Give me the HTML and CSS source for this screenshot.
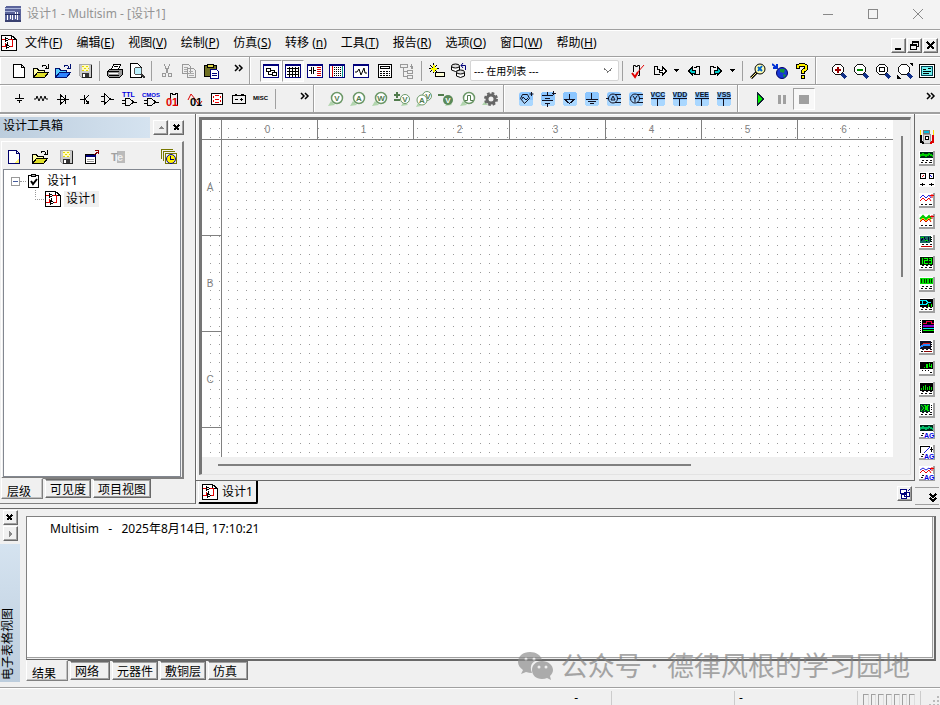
FILE: index.html
```html
<!DOCTYPE html>
<html lang="zh-CN">
<head>
<meta charset="utf-8">
<title>设计1 - Multisim - [设计1]</title>
<link rel="stylesheet" href="styles.css">
</head>
<body>
<svg class="sprite" aria-hidden="true">
  <symbol id="doc" viewBox="0 0 16 16"><path d="M2.500 1.500h8l3 3v10h-11zM10.500 1.500v3h3" fill="#fff" stroke="#000"/></symbol>
  <symbol id="open" viewBox="0 0 16 16"><path d="M.500 14.500v-9h4l1 2h6v3" fill="#ffffa8" stroke="#000"/><path d="M.500 14.500l4-5h11l-4 5z" fill="#dede28" stroke="#000"/><path d="M9 3.500q3-3 5 1M15.500 1v4H12" fill="none" stroke="#000"/></symbol>
  <symbol id="openb" viewBox="0 0 16 16"><path d="M.500 14.500v-9h4l1 2h6v3" fill="#5cf" stroke="#001070"/><path d="M.500 14.500l4-5h11l-4 5z" fill="#2d83ff" stroke="#001070"/><path d="M9 3.500q3-3 5 1M15.500 1v4H12" fill="none" stroke="#001070"/></symbol>
  <symbol id="save" viewBox="0 0 16 16"><path d="M2.500 1.500h12v13h-10l-2-2z" fill="#ccc" stroke="#aaa"/><path d="M5 2h7v6H5z" fill="#fffbc0"/><path d="M5 3h2M9 3h2M7 5h2M11 5h1M5 7h2M9 7h2" stroke="#e4d900"/><path d="M5 10h7v4H5z" fill="#333"/><path d="M6 11h2v3H6z" fill="#fff"/><path d="M14.500 2v12.500H5" fill="none" stroke="#222"/></symbol>
  <symbol id="schem" viewBox="0 0 16 16"><path d="M.5.500h10l5 4v11H.500z" fill="#fff" stroke="#000"/><path d="M10.500.500v4h5" fill="none" stroke="#000"/><path d="M1 4.500h3M1 11.500h3.500V8M8 4.500h3.500v7H8" fill="none" stroke="#e00000"/><path d="M4.500 2.500v4l3-2zM5.500 9.500v4l3-2zM6.500 7v3" fill="#fff" stroke="#000"/></symbol>
  <symbol id="mag" viewBox="0 0 16 16"><path d="M11 11l4 4" stroke="#123088" stroke-width="3"/><circle cx="7" cy="6.500" r="5.500" fill="#fff" stroke="#111"/></symbol>
  <symbol id="probe" viewBox="0 0 16 16"><path d="M0 15l3-5 4 4z" fill="#b1d5ad"/><circle cx="9" cy="7" r="5.500" fill="#fff" stroke="#6c9868" stroke-width="1.500"/></symbol>
  <symbol id="src" viewBox="0 0 16 16"><rect x="1" y="1" width="14" height="14" rx="3" fill="#8cc6ff"/><path d="M1 9h14v3q0 3-3 3H4q-3 0-3-3z" fill="#a9d7ff"/></symbol>
  <symbol id="screen" viewBox="0 0 16 16"><path d="M0 0h16v15H0z" fill="#fff"/><path d="M1 1h14v6H1z" fill="#002818"/><path d="M0 14h15V0" fill="none" stroke="#a0a0a0" stroke-width="2"/><path d="M3 9.500h2M7 9.500h2M11 9.500h2M2 11.500h2M6 11.500h2M10 11.500h3" stroke="#111"/></symbol>
  <symbol id="panelb" viewBox="0 0 16 16"><path d="M.500 1.500h15v13H.500z" fill="#fff" stroke="#00007b"/><path d="M0 2h16" stroke="#00007b" stroke-width="2"/></symbol>
  <symbol id="step" viewBox="0 0 16 16"><path d="M7.500 11.500h-5v-8h3v3H8" fill="none" stroke="#000"/><path d="M7.500 7h3V4l4 4-4 4V9h-3z" fill="#fff" stroke="#000"/></symbol>
  <symbol id="more" viewBox="0 0 10 8"><path d="M1 1l3 3-3 3M5 1l3 3-3 3" fill="none" stroke="#000" stroke-width="1.500"/></symbol>
  <symbol id="arrow" viewBox="0 0 8 4"><path d="M1 0h6L4 3z"/></symbol>
</svg>
<div class="app">
  <header class="title">
    <svg class="logo" viewBox="0 0 16 16"><rect width="16" height="16" rx="2" fill="#5a639a"/><path d="M0 2.500h16M0 5.500h10" stroke="#aab4da"/><path d="M2.500 9v5M5.500 9v4M7.500 9v5M10.500 6v7M12.500 6v8" stroke="#fff"/><path d="M0 8.500h15" stroke="#232c62"/><path d="M0 14h16v2H0z" fill="#39406f"/></svg>
    <h1>设计1 - Multisim - [设计1]</h1>
    <div class="winbtns">
      <button aria-label="最小化"><svg viewBox="0 0 12 12"><path d="M1 6.500h10"/></svg></button>
      <button aria-label="最大化"><svg viewBox="0 0 12 12"><path d="M1.500 1.500h9v9h-9z"/></svg></button>
      <button aria-label="关闭"><svg class="smooth" viewBox="0 0 12 12"><path d="M1 1l10 10M11 1L1 11"/></svg></button>
    </div>
  </header>

  <nav class="menu">
    <svg class="i"><use href="#schem"/></svg>
    <button>文件(<u>F</u>)</button><button>编辑(<u>E</u>)</button><button>视图(<u>V</u>)</button><button>绘制(<u>P</u>)</button><button>仿真(<u>S</u>)</button><button>转移 (<u>n</u>)</button><button>工具(<u>T</u>)</button><button>报告(<u>R</u>)</button><button>选项(<u>O</u>)</button><button>窗口(<u>W</u>)</button><button>帮助(<u>H</u>)</button>
    <div class="mdi">
      <button class="sq" aria-label="最小化文档"><svg viewBox="0 0 12 12"><path d="M2 9h6" stroke="#000" stroke-width="2"/></svg></button>
      <button class="sq" aria-label="还原文档"><svg viewBox="0 0 12 12"><path d="M3.500 5V1.500h6v5H8M3 2.500h7M1.500 4.500h6v5h-6zM1 5.500h7" fill="none" stroke="#000"/></svg></button>
      <button class="sq" aria-label="关闭文档"><svg viewBox="0 0 12 12"><path d="M2 2l7 7M9 2L2 9" stroke="#000" stroke-width="2"/></svg></button>
    </div>
  </nav>

  <div class="bar">
    <div class="group g-std">
      <button class="tb" aria-label="新建"><svg class="i"><use href="#doc"/></svg></button>
      <button class="tb" aria-label="打开"><svg class="i"><use href="#open"/></svg></button>
      <button class="tb" aria-label="打开样本"><svg class="i"><use href="#openb"/></svg></button>
      <button class="tb" aria-label="保存"><svg class="i"><use href="#save"/></svg></button>
      <i class="sep"></i>
      <button class="tb" aria-label="打印"><svg class="i" viewBox="0 0 16 16"><path d="M4.500 6.500l2-5h7l-2 5z" fill="#fff" stroke="#000"/><path d="M.500 8.500l2-2h13v5l-3 3h-10l-2-2z" fill="#999" stroke="#000"/><path d="M1 8.500h11M2 12.500h10M7 3.500h4" stroke="#000"/><path d="M2 10.500h9" stroke="#fff"/></svg></button>
      <button class="tb" aria-label="打印预览"><svg class="i" viewBox="0 0 16 16"><path d="M1.500.500h7l4 4v10h-11z" fill="#fff" stroke="#000"/><circle cx="9" cy="8" r="4" fill="#bdf3ff" stroke="#555"/><path d="M12 11l4 4" stroke="#333" stroke-width="2"/></svg></button>
      <i class="sep"></i>
      <button class="tb" aria-label="剪切"><svg class="i" viewBox="0 0 16 16"><path d="M5 1l4 9M11 1L7 10" fill="none" stroke="#999"/><circle cx="5" cy="12" r="2" fill="none" stroke="#999"/><circle cx="11" cy="12" r="2" fill="none" stroke="#999"/></svg></button>
      <button class="tb" aria-label="复制"><svg class="i" viewBox="0 0 16 16"><path d="M1.500 1.500h6l2 2v7h-8zM6.500 5.500h6l2 2v7h-8z" fill="#eee" stroke="#999"/><path d="M3 4.500h4M3 6.500h3M3 8.500h3M8 8.500h4M8 10.500h5M8 12.500h5" stroke="#aaa"/></svg></button>
      <button class="tb" aria-label="粘贴"><svg class="i" viewBox="0 0 16 16"><path d="M1.500 2.500h12v11h-12z" fill="#6f6f22" stroke="#000"/><path d="M4.500 1.500h6v3h-6z" fill="#ded64a" stroke="#000"/><path d="M7.500 6.500h6l2 2v7h-8z" fill="#fff" stroke="#00007b"/><path d="M9 10.500h5M9 12.500h5" stroke="#00007b"/></svg></button>
      <button class="more" aria-label="更多标准工具"><svg><use href="#more"/></svg></button>
    </div>
    <div class="group g-main">
      <button class="tb on" aria-label="设计工具箱"><svg class="i"><use href="#panelb"/><path d="M3.500 5.500h4v3h-4zM9.500 9.500h4v3h-4zM5.500 9v2.500H9M8 7.500h3.500V9" fill="none" stroke="#000"/></svg></button>
      <button class="tb on" aria-label="电子表格视图"><svg class="i"><use href="#panelb"/><path d="M2 5.500h12M2 8.500h12M2 11.500h12M4.500 4v10M7.500 4v10M10.500 4v10M13.500 4v10" stroke="#000"/></svg></button>
      <button class="tb" aria-label="SPICE 网表"><svg class="i"><use href="#panelb"/><path d="M2 7.500h2M4.500 4v7M6.500 4v7M7 7.500h2" stroke="#000"/><path d="M10 4.500h4M10 6.500h4M10 8.500h4M10 10.500h4M10 12.500h4" stroke="#d00"/></svg></button>
      <button class="tb" aria-label="面包板"><svg class="i"><use href="#panelb"/><path d="M5.500 4v10M7.500 4v10M9.500 4v10M11.500 4v10" stroke="#000" stroke-dasharray="1 1"/><path d="M3.500 3v11" stroke="#d00"/><path d="M13.500 3v11" stroke="#098"/></svg></button>
      <button class="tb gap" aria-label="图示仪"><svg class="i"><use href="#panelb"/><path class="smooth" d="M2 9h2l2-3 2 6 3-7 1 5h2" fill="none" stroke="#000"/></svg></button>
      <button class="tb gap" aria-label="后处理器"><svg class="i" viewBox="0 0 16 16"><path d="M1.500 1.500h13v13h-13zM3.500 3.500h9v2h-9z" fill="#fff" stroke="#000"/><path d="M3 8.500h10M3 10.500h10M3 12.500h10" stroke="#000" stroke-dasharray="2 1"/></svg></button>
      <button class="tb" aria-label="母电路图"><svg class="i" viewBox="0 0 16 16"><path d="M1.500 1.500h7v3h-7zM4.500 5v8.500H8M5 8.500h3M8.500 7.500h5v3h-5zM8.500 12.500h5v3h-5zM13.500 6V3.500H11M12.500 1v5" fill="none" stroke="#999"/></svg></button>
      <i class="sep"></i>
      <button class="tb" aria-label="元器件向导"><svg class="i" viewBox="0 0 16 16"><path d="M4.500 0v10M0 5.500h10M1 2l7 7M8 2L1 9" stroke="#000"/><path d="M4.500 2v7M2 5.500h6" stroke="#ff0" stroke-width="2"/><path d="M6.500 9.500h9v4h-9z" fill="#ffffd8" stroke="#000"/></svg></button>
      <button class="tb" aria-label="数据库管理器"><svg class="i smooth" viewBox="0 0 16 16"><path d="M.500 3v4q4 3 8 0V3M5.500 9v4q4 3 8 0V9" fill="#fff" stroke="#000"/><ellipse cx="4.500" cy="3" rx="4" ry="2" fill="#ddd" stroke="#000"/><ellipse cx="9.500" cy="9" rx="4" ry="2" fill="#ddd" stroke="#000"/><path d="M10 2.500h4.500V7M12 0l-2 2.500L12 5" fill="none" stroke="#00007b"/></svg></button>
      <select class="inuse" aria-label="在用列表"><option>--- 在用列表 ---</option></select>
      <i class="sep"></i>
      <button class="tb" aria-label="电气规则检查"><svg class="i smooth" viewBox="0 0 16 16"><path d="M3.500 9V2.500h2v1h2v-1h2v10H8" fill="none" stroke="#000"/><path d="M2 10l3 4 3-5" fill="none" stroke="#e00000" stroke-width="2"/><path d="M7 10l7-8" stroke="#e00000"/></svg></button>
      <button class="tb" aria-label="转移到 Ultiboard"><svg class="i"><use href="#step"/></svg></button>
      <button class="drop" aria-label="转移选项"><svg><use href="#arrow"/></svg></button>
      <button class="tb" aria-label="反向注解"><svg class="i" viewBox="0 0 16 16"><path d="M2.500 8l4-4v3h3v3h-3v2z" fill="#0cc" stroke="#000"/><path d="M8 4.500h2V3.500h3v8H8" fill="none" stroke="#000"/></svg></button>
      <button class="tb" aria-label="正向注解"><svg class="i" viewBox="0 0 16 16"><path d="M8 11.500H2.500v-8h3v1H8" fill="none" stroke="#000"/><path d="M6.500 7h3V4l4 4-4 4v-2h-3z" fill="#0cc" stroke="#000"/></svg></button>
      <button class="drop" aria-label="注解选项"><svg><use href="#arrow"/></svg></button>
      <i class="sep"></i>
      <button class="tb" aria-label="查找范例"><svg class="i smooth" viewBox="0 0 16 16"><path d="M1 15l6-6" stroke="#000" stroke-width="3"/><path d="M1 15l6-6" stroke="#ffef80"/><circle cx="10" cy="6" r="5" fill="#ffffb4" stroke="#000"/><path d="M8 4l4 4M12 3l-4 5" stroke="#06c" stroke-width="2"/></svg></button>
      <button class="tb" aria-label="教学网站"><svg class="i smooth" viewBox="0 0 16 16"><circle cx="10" cy="10" r="5.500" fill="#1737d4" stroke="#006"/><path d="M8 6l5 0-1 4-4-1zM11 11l3 1-2 3z" fill="#159536"/><path d="M0 1l5 4M5 1v4H1" fill="none" stroke="#0030d4" stroke-width="2"/></svg></button>
      <button class="tb" aria-label="帮助"><svg class="i" viewBox="0 0 16 16"><path d="M4 6V3l2-1h4l2 1v3L9 8v3M9 12v4" fill="none" stroke="#000" stroke-width="4"/><path d="M4 5V3l2-1h4l2 1v3L9 8v2M9 13v2" fill="none" stroke="#fff200" stroke-width="2"/></svg></button>
    </div>
    <div class="group g-view">
      <button class="tb" aria-label="放大"><svg class="i"><use href="#mag"/><path d="M4 7h6M7 4v6" stroke="#900" stroke-width="2"/></svg></button>
      <button class="tb" aria-label="缩小"><svg class="i"><use href="#mag"/><path d="M4 7h6" stroke="#080" stroke-width="2"/></svg></button>
      <button class="tb" aria-label="缩放区域"><svg class="i"><use href="#mag"/><path d="M4.500 4.500h5v4h-5z" fill="none" stroke="#000"/></svg></button>
      <button class="tb" aria-label="缩放页面"><svg class="i"><use href="#mag"/><path d="M12 0h4v4zM0 12v4h4z"/></svg></button>
      <button class="tb" aria-label="全屏"><svg class="i" viewBox="0 0 16 16"><path d="M.5 1.500h15v13H.500z" fill="#fff" stroke="#000"/><path d="M2.500 3.500h11v9h-11z" fill="#70f1ef" stroke="#045"/><path d="M4 6.500h3M4 8.500h8M4 10.500h6M9 5.500h3" stroke="#000"/></svg></button>
    </div>
  </div>

  <div class="bar">
    <div class="group g-comp">
      <button class="tb" aria-label="电源"><svg class="i" viewBox="0 0 16 16"><path d="M8.500 3v4M4 7.500h9M6 9.500h5M8.500 10v2" stroke="#000"/></svg></button>
      <button class="tb" aria-label="电阻"><svg class="i smooth" viewBox="0 0 16 16"><path d="M1 8h2l1-3 2 5 2-5 2 5 2-5 1 3h2" fill="none" stroke="#000"/></svg></button>
      <button class="tb" aria-label="二极管"><svg class="i" viewBox="0 0 16 16"><path d="M2 8.500h12M5.500 4v9l5-4.500zM10.500 4v9" fill="none" stroke="#000"/></svg></button>
      <button class="tb" aria-label="晶体管"><svg class="i" viewBox="0 0 16 16"><path d="M3 8.500h5M7.500 4v9M8 8l4-4M8 8l4 5M9 12.500h2.500V10" fill="none" stroke="#000"/></svg></button>
      <button class="tb" aria-label="模拟"><svg class="i" viewBox="0 0 16 16"><path d="M5.500 3v10l6-5zM2 5.500h3M2 10.500h3M11 8.500h4" fill="none" stroke="#000"/></svg></button>
      <button class="tb" aria-label="TTL"><svg class="i wide" viewBox="0 0 16 16"><path d="M4.500 7.500v7h4l4-3.500-4-3.500zM1 9.500h4M1 12.500h4M12 11.500h4" fill="none" stroke="#000"/><text x="1" y="6" class="blue">TTL</text></svg></button>
      <button class="tb" aria-label="CMOS"><svg class="i wide" viewBox="0 0 16 16"><path d="M4.500 7.500v7h4l4-3.500-4-3.500zM1 9.500h4M1 12.500h4M12 11.500h4" fill="none" stroke="#000"/><text x="-1" y="6" class="blue cm">CMOS</text></svg></button>
      <button class="tb" aria-label="其他数字"><svg class="i" viewBox="0 0 16 16"><path d="M5.500 8V2.500h2v1h3v-1h2v12H11" fill="none" stroke="#000"/><text x="1" y="15" class="num red">01</text></svg></button>
      <button class="tb" aria-label="混合"><svg class="i smooth" viewBox="0 0 16 16"><path d="M1 9l3-6 4 5 4 6 3-4" fill="none" stroke="#d00"/><text x="3" y="15" class="num">01</text></svg></button>
      <button class="tb" aria-label="指示器"><svg class="i" viewBox="0 0 16 16"><path d="M2.500 2.500h11v11h-11z" fill="#fff" stroke="#000"/><path d="M6 4.500h4M6 8.500h4M6 11.500h4M4.500 5v2M11.500 5v2M4.500 9v2M11.500 9v2" stroke="#e00"/></svg></button>
      <button class="tb" aria-label="功率"><svg class="i" viewBox="0 0 16 16"><path d="M1.500 4.500h13v8h-13zM4 3.500h2M10 3.500h3M4 8.500h3M9 8.500h3M10.500 7v3" fill="none" stroke="#000"/></svg></button>
      <button class="tb" aria-label="MISC"><svg class="i wide" viewBox="0 0 16 16"><text x="0" y="9" class="micro">MISC</text></svg></button>
      <i class="sep"></i>
      <button class="more" aria-label="更多元器件"><svg><use href="#more"/></svg></button>
    </div>
    <div class="group g-probe">
      <button class="tb" aria-label="电压探针"><svg class="i smooth"><use href="#probe"/><text x="9" y="10" class="pl">V</text></svg></button>
      <button class="tb" aria-label="电流探针"><svg class="i smooth"><use href="#probe"/><text x="9" y="10" class="pl">A</text></svg></button>
      <button class="tb" aria-label="功率探针"><svg class="i smooth"><use href="#probe"/><text x="9" y="10" class="pl">W</text></svg></button>
      <button class="tb" aria-label="差分电压探针"><svg class="i smooth"><path d="M7 15l3-5 4 4z" fill="#b1d5ad"/><circle cx="11" cy="8" r="4.500" fill="#fff" stroke="#6c9868"/><path d="M0 4h6M3 1v6M0 9h6" stroke="#527c4e" stroke-width="2"/><text x="11" y="11" class="pl">V</text></svg></button>
      <button class="tb" aria-label="电压电流探针"><svg class="i smooth"><path d="M0 16l2-4 3 3z" fill="#b1d5ad"/><circle cx="11" cy="5" r="4.500" fill="#fff" stroke="#6c9868"/><circle cx="6" cy="9" r="5" fill="#fff" stroke="#6c9868"/><text x="6" y="12" class="pl">A</text><text x="12" y="8" class="pl">V</text></svg></button>
      <button class="tb" aria-label="参考探针"><svg class="i smooth"><path d="M7 15l3-5 4 4z" fill="#b1d5ad"/><circle cx="10" cy="9" r="5" fill="#5b8a59"/><path d="M0 4h6" stroke="#527c4e" stroke-width="2"/><text x="10" y="12" class="pl white">V</text></svg></button>
      <button class="tb" aria-label="数字探针"><svg class="i smooth"><use href="#probe"/><path d="M5 9.500h2.500v-5h3v5H13" fill="none" stroke="#527c4e"/></svg></button>
      <button class="tb" aria-label="探针设置"><svg class="i smooth" viewBox="0 0 16 16"><path d="M0 14l3-4 3 4z" fill="#b1d5ad"/><circle cx="9" cy="8" r="4" fill="none" stroke="#666" stroke-width="3"/><circle cx="9" cy="8" r="6" fill="none" stroke="#666" stroke-width="2" stroke-dasharray="2.700 2"/></svg></button>
    </div>
    <div class="group g-src">
      <button class="tb" aria-label="交流电源"><svg class="i smooth"><use href="#src"/><path d="M2.500 7.500l2-4h5l2 4-5 5zM4 8l1-2 3 3 2-2M13.500 1v4M11.500 3h4" fill="none" stroke="#112"/></svg></button>
      <button class="tb" aria-label="直流电源"><svg class="i"><use href="#src"/><path d="M7.500 1v3M2 4.500h11M5 7.500h5M2 9.500h11M5 12.500h5M7.500 13v3M13.500 0v4M12 2.500h4" stroke="#112"/></svg></button>
      <button class="tb" aria-label="数字地"><svg class="i"><use href="#src"/><path d="M7.500 3v5M2.500 8.500h10l-5 4z" fill="none" stroke="#112"/></svg></button>
      <button class="tb" aria-label="接地"><svg class="i"><use href="#src"/><path d="M7.500 2v6M2 8.500h12M4 10.500h8M6 12.500h4" stroke="#112"/></svg></button>
      <button class="tb" aria-label="三角形三相电源"><svg class="i smooth"><use href="#src"/><circle cx="7" cy="7.500" r="4.500" fill="none" stroke="#112"/><path d="M9 3.500h6M11 7.500h4M9 11.500h6M5 9l2-4 2 4zM0 7.500h3" fill="none" stroke="#112"/></svg></button>
      <button class="tb" aria-label="星形三相电源"><svg class="i smooth"><use href="#src"/><circle cx="7" cy="7.500" r="4.500" fill="none" stroke="#112"/><path d="M9 3.500h6M11 7.500h4M9 11.500h6M5 5l2 3 2-3M7 8v3" fill="none" stroke="#112"/></svg></button>
      <button class="tb" aria-label="VCC"><svg class="i wide"><use href="#src"/><path d="M1 7.500h14M7.500 8v7" stroke="#112"/><text x="8" y="6" class="supply">VCC</text></svg></button>
      <button class="tb" aria-label="VDD"><svg class="i wide"><use href="#src"/><path d="M1 7.500h14M7.500 8v7" stroke="#112"/><text x="8" y="6" class="supply">VDD</text></svg></button>
      <button class="tb" aria-label="VEE"><svg class="i wide"><use href="#src"/><path d="M1 7.500h14M7.500 8v7" stroke="#112"/><text x="8" y="6" class="supply">VEE</text></svg></button>
      <button class="tb" aria-label="VSS"><svg class="i wide"><use href="#src"/><path d="M1 7.500h14M7.500 8v7" stroke="#112"/><text x="8" y="6" class="supply">VSS</text></svg></button>
    </div>
    <div class="group g-sim">
      <button class="tb" aria-label="运行"><svg class="i" viewBox="0 0 16 16"><path d="M5.500 2v12l6-6z" fill="#00f000" stroke="#123"/></svg></button>
      <button class="tb" aria-label="暂停"><svg class="i" viewBox="0 0 16 16"><path d="M4 4h3v9H4zM9 4h3v9H9z" fill="#a0a0a0"/></svg></button>
      <button class="tb on" aria-label="停止"><svg class="i" viewBox="0 0 16 16"><path d="M3 4h10v9H3z" fill="#a0a0a0"/></svg></button>
      <button class="more end" aria-label="更多仿真工具"><svg><use href="#more"/></svg></button>
    </div>
  </div>

  <main class="work">
    <aside class="toolbox">
      <div class="caption"><h2>设计工具箱</h2>
        <button class="sq" aria-label="收起"><svg viewBox="0 0 12 12"><path d="M3 7h6L6 4z" fill="#888"/></svg></button>
        <button class="sq" aria-label="关闭设计工具箱"><svg viewBox="0 0 12 12"><path d="M3 3l5 5M8 3L3 8" stroke="#000" stroke-width="2"/></svg></button>
      </div>
      <div class="tree-box">
        <div class="tree-tools">
          <button class="tb" aria-label="新建设计"><svg class="i"><path d="M2.500 1.500h8l3 3v10h-11zM10.500 1.500v3h3" fill="#fff" stroke="#00006b"/><path d="M8 14l5-5v5z" fill="#fff46e"/></svg></button>
          <button class="tb" aria-label="打开设计"><svg class="i"><use href="#open"/></svg></button>
          <button class="tb" aria-label="保存设计"><svg class="i"><use href="#save"/></svg></button>
          <button class="tb" aria-label="关闭设计"><svg class="i"><path d="M1.500 5.500h10v9h-10z" fill="#fff" stroke="#000"/><path d="M2 7h10" stroke="#00007b" stroke-width="2"/><path d="M3 10.500h7M3 12.500h7" stroke="#999"/><path d="M10 6l5-4M11 1.500h3.500V5" fill="none" stroke="#800"/></svg></button>
          <button class="tb" aria-label="重命名"><svg class="i"><path d="M7 2h8v12H7z" fill="#bbb"/><text x="1" y="12" class="te">T<tspan fill="#eee">e</tspan></text></svg></button>
          <button class="tb last" aria-label="版本"><svg class="i"><path d="M.5 10V.500h11M2.500 12V2.500h11M4.500 14.500v-10h11v10z" fill="none" stroke="#777700"/><circle class="smooth" cx="10" cy="10" r="4.500" fill="#fff200" stroke="#009"/><path d="M9.500 7v3.500H13" fill="none" stroke="#006"/></svg></button>
        </div>
        <ul class="tree">
          <li><span class="minus"></span><i class="dots"></i><svg class="i" viewBox="0 0 16 16"><path d="M2.500 2.500h10v12h-10z" fill="#fff" stroke="#000"/><path d="M5.500 1.500h4v2h-4z" fill="#bbb" stroke="#000"/><path class="smooth" d="M5 8l2 3 4-5" fill="none" stroke="#000" stroke-width="2"/></svg><span class="node">设计1</span></li>
          <li class="child"><i class="elbow"></i><svg class="i"><use href="#schem"/></svg><span class="node sel">设计1</span></li>
        </ul>
      </div>
      <div class="tabs"><button class="active">层级</button><button>可见度</button><button>项目视图</button></div>
    </aside>

    <section class="docs">
      <div class="frame">
        <div class="canvas">
          <div class="sheet">
            <div class="corner"></div>
            <div class="ruler-x"><span>0</span><span>1</span><span>2</span><span>3</span><span>4</span><span>5</span><span>6</span></div>
            <div class="ruler-y"><span>A</span><span>B</span><span>C</span><span></span></div>
            <div class="paper"></div>
          </div>
          <div class="vscroll"><i></i></div>
          <div class="hscroll"><i></i></div>
        </div>
      </div>
      <div class="doc-tabs">
        <button class="doc-tab"><svg class="i"><use href="#schem"/></svg>设计1</button>
        <button class="sq cascade" aria-label="层叠窗口"><svg viewBox="0 0 12 12"><path d="M1.500 1.500h6v4h-6zM5.500 4.500h5v4h-5zM2.500 6.500h5v4h-5z" fill="#fff" stroke="#00007b"/><path d="M9 3l2-2" stroke="#00007b"/></svg></button>
      </div>
    </section>

    <aside class="instruments">
      <button aria-label="万用表"><svg class="i"><path d="M4.500.500h6v3h-6z" fill="#0bd" stroke="#777"/><path d="M4.500 4.500h7v9h-7z" fill="#ddd" stroke="#999"/><circle cx="8" cy="8" r="2" fill="#fff" stroke="#000"/><path d="M1.500 0v5M14.500 0v5" stroke="#fd0"/><path d="M2 5v7l3 1" fill="none" stroke="#000" stroke-width="2"/><path d="M14 5v7l-3 1" fill="none" stroke="#d00" stroke-width="2"/></svg></button>
      <button aria-label="函数发生器"><svg class="i"><use href="#screen"/><path d="M1 5l3-2 3 2 3-2 4 2" fill="none" stroke="#0c0" stroke-width="2"/></svg></button>
      <button aria-label="瓦特计"><svg class="i"><path d="M0 0h16v15H0z" fill="#fff"/><path d="M1.500 1.500h5v5h-5zM10.500 1.500h4v5h-4zM1 12.500h5M10 12.500h5M3.500 11v3M12.500 11v3" fill="none" stroke="#000"/><path d="M3 5l2-2" stroke="#d00"/><path d="M11 3l2 2" stroke="#00d"/></svg></button>
      <button aria-label="示波器"><svg class="i"><use href="#screen"/><path d="M1 1h13v9H1z" fill="#fff"/><path class="smooth" d="M1 5l3-3 3 3 3-3 2 3" fill="none" stroke="#22d"/><path class="smooth" d="M1 8l3-3 3 3 3-3 2 3M11 2.500h4M13 1v4" fill="none" stroke="#e00"/></svg></button>
      <button aria-label="四通道示波器"><svg class="i"><use href="#screen"/><path d="M1 1h13v9H1z" fill="#fff"/><path class="smooth" d="M1 5l3-3 3 3 3-3 2 3" fill="none" stroke="#0c0" stroke-width="2"/><path class="smooth" d="M1 7l3-3 3 3 3-3 2 3" fill="none" stroke="#fc0"/><path class="smooth" d="M1 8l3-3 3 3 3-3 2 3M11 2.500h4M13 1v4" fill="none" stroke="#d00"/></svg></button>
      <button aria-label="波特测试仪"><svg class="i"><use href="#screen"/><path d="M12 1h2v6h-2z" fill="#fff"/><path d="M1 1h10v7H1z" fill="#176a62"/><path d="M2 6l3-4 3 5M9 2v4" fill="none" stroke="#003"/><path d="M2 2.500h3M6 5.500h3" stroke="#0d0"/><path d="M2 11.500h11" stroke="#c00"/><path d="M12.500 2v5" stroke="#000" stroke-dasharray="1 1"/></svg></button>
      <button aria-label="频率计数器"><svg class="i"><use href="#screen"/><path d="M1 1h13v8H1z" fill="#001c00"/><path d="M3.500 2v6M5 2.500h3.500v2h-3v3H9M10 2.500h2.500v5H10M10 4.500h3" fill="none" stroke="#0f0"/></svg></button>
      <button aria-label="字发生器"><svg class="i"><use href="#screen"/><path d="M1 1h13v6H1z" fill="#0d0"/><path d="M2.500 2v4M5.500 2v4M7.500 2v4M10.500 2v4M12.500 2v4" stroke="#003000"/></svg></button>
      <button aria-label="逻辑变换器"><svg class="i"><use href="#screen"/><path d="M1 1h13v8H1z"/><path d="M1 2.500h2.500v4H1M3 2.500h4l2 2-2 2H3M9 4.500h3" fill="none" stroke="#0ef"/><path d="M9.500 6v3M12.500 6v3" stroke="#0e0"/></svg></button>
      <button aria-label="逻辑分析仪"><svg class="i"><path d="M0 0h16v15H0z" fill="#fff"/><path d="M3 1h12v13H3z"/><path d="M4 4.500h3v-2h5v2h3" fill="none" stroke="#e04"/><path d="M4 7h11" stroke="#80c" stroke-width="2"/><path d="M4 9.500h11" stroke="#0de"/><path d="M4 11.500h11" stroke="#0e0"/><path d="M1.500 1v13" stroke="#000" stroke-dasharray="1 1"/></svg></button>
      <button aria-label="伏安分析仪"><svg class="i"><use href="#screen"/><path d="M1 1h11v8H1z" fill="#112"/><path d="M12 1h2v6h-2z" fill="#fff"/><path d="M2 6l3-3h6" fill="none" stroke="#d22"/><path d="M1 7l4-2h6" fill="none" stroke="#28f" stroke-width="2"/><path d="M5 11.500h8" stroke="#800"/><path d="M12.500 2v5" stroke="#000" stroke-dasharray="1 1"/></svg></button>
      <button aria-label="失真分析仪"><svg class="i"><path d="M0 0h16v15H0z" fill="#fff"/><path d="M0 14h15V0" fill="none" stroke="#a0a0a0" stroke-width="2"/><path d="M1 1h13v7H1z"/><path d="M5 6.500h1M8.500 3.500v3h-1v-3zM10.500 2v3H13M12.500 3v4" fill="none" stroke="#0e0"/><path d="M3 9.500h1M6 9.500h1M9 9.500h1M11 11.500h2" stroke="#000"/></svg></button>
      <button aria-label="光谱分析仪"><svg class="i"><use href="#screen"/><path d="M1 1h13v8H1z"/><path d="M2.500 6v2M4.500 4v4M6.500 3v5M8.500 5v3M10.500 4v4M12.500 5v3" stroke="#0d0"/></svg></button>
      <button aria-label="网络分析仪"><svg class="i"><use href="#screen"/><path d="M11 1h3v6h-3z" fill="#fff"/><path d="M1 1h10v8H1z" fill="#032"/><path d="M2 2l3 3-3 3M5 2l4 3-4 3M10 2L6 5l4 3" fill="none" stroke="#0e0"/><path d="M12.500 2v5" stroke="#000" stroke-dasharray="1 1"/></svg></button>
      <button aria-label="安捷伦函数发生器"><svg class="i"><use href="#screen"/><path d="M1 5l3-2 3 2 3-2 4 2" fill="none" stroke="#0b6" stroke-width="2"/><path d="M5 8h10v6H5z" fill="#fff"/><text x="5" y="14" class="ag">AG</text></svg></button>
      <button aria-label="安捷伦万用表"><svg class="i"><use href="#screen"/><path d="M1 1h13v7H1z" fill="#fff"/><path d="M1.500 8V1.500H11M12.500 2v5M11 4.500h3" fill="none" stroke="#000"/><path d="M5 8l6-6" stroke="#22d"/><path d="M5 8h10v6H5z" fill="#fff"/><text x="5" y="14" class="ag">AG</text></svg></button>
      <button aria-label="安捷伦示波器"><svg class="i"><use href="#screen"/><path d="M1 1h13v7H1z" fill="#fff"/><path class="smooth" d="M1 4l3-2 3 2 3-2 2 2" fill="none" stroke="#22d"/><path class="smooth" d="M1 7l3-3 3 3 3-3 2 3M13 1v4M11 2.500h4" fill="none" stroke="#e00"/><path d="M5 8h10v6H5z" fill="#fff"/><text x="5" y="14" class="ag">AG</text></svg></button>
      <button class="down" aria-label="更多仪器"><svg viewBox="0 0 12 12"><path d="M3 2l3 3 3-3M3 6l3 3 3-3" fill="none" stroke="#000" stroke-width="2"/></svg></button>
    </aside>
  </main>

  <section class="spread">
    <div class="side">
      <button class="sq" aria-label="关闭电子表格视图"><svg viewBox="0 0 12 12"><path d="M3 3l5 5M8 3L3 8" stroke="#000" stroke-width="2"/></svg></button>
      <button class="sq" aria-label="展开"><svg viewBox="0 0 12 12"><path d="M5 3v6l3-3z" fill="#888"/></svg></button>
      <h2>电子表格视图</h2>
    </div>
    <div class="results">
      <div class="log"><p>Multisim&nbsp;&nbsp; -&nbsp;&nbsp; 2025年8月14日, 17:10:21</p></div>
      <div class="tabs"><button class="active">结果</button><button>网络</button><button>元器件</button><button>敷铜层</button><button>仿真</button></div>
    </div>
    <div class="watermark">
      <svg viewBox="0 0 36 30"><path d="M13 1C6 1 1 5 1 11c0 3 2 6 5 8l-2 4 5-2q3 1 6 1C11 13 18 8 25 9 24 4 19 1 13 1z" fill="#8b8b8b"/><path d="M25 10c-6 0-10 4-10 9s4 9 10 9q3 0 5-1l4 2-1-4c2-2 3-4 3-6 0-5-5-9-11-9z" fill="#8b8b8b"/><g fill="#eee"><circle cx="9" cy="8" r="1.500"/><circle cx="17" cy="8" r="1.500"/><circle cx="22" cy="16" r="1.500"/><circle cx="29" cy="16" r="1.500"/></g></svg>
      <span>公众号 <span class="mid">·</span> 德律风根的学习园地</span>
    </div>
  </section>

  <footer class="status">
    <div class="s-main">-</div><div class="s-cell"></div><div class="s-cell">-</div>
    <div class="s-prog"><i></i><i></i><i></i><i></i><i></i><i></i><i></i></div>
    <div class="grip"><svg viewBox="0 0 12 12"><path d="M9 1h2v2H9zM5 5h2v2H5zM9 5h2v2H9zM1 9h2v2H1zM5 9h2v2H5zM9 9h2v2H9z" fill="#bbb"/></svg></div>
  </footer>
</div>
</body>
</html>
```
FILE: styles.css
```css
* { box-sizing: border-box; }
body {
  margin: 0;
  overflow: hidden;
  background: #f0f0f0;
  color: #000;
  font: 12px/16px "Noto Sans", "Noto Sans CJK SC", sans-serif;
}
button {
  margin: 0;
  padding: 0;
  border: 0;
  background: none;
  color: inherit;
  font: inherit;
}
h1, h2, p, ul { margin: 0; padding: 0; font-size: 12px; font-weight: 400; list-style: none; }
svg { display: block; shape-rendering: crispEdges; }
.smooth, .i.smooth { shape-rendering: auto; }
.sprite { position: absolute; width: 0; height: 0; }
.sprite symbol { shape-rendering: inherit; }
.i { width: 16px; height: 16px; flex: none; }
.app { display: flex; flex-direction: column; height: 100vh; }

/* small text drawn inside icons */
.i text { font-family: "Liberation Sans", sans-serif; font-weight: 700; }
.wide { overflow: visible; }
.blue { font-size: 7px; fill: #0000e0; }
.cm { font-size: 6px; }
.micro { font-size: 6px; }
.num { font-size: 11px; }
.red { fill: #e00000; }
.pl { font-size: 8px; fill: #527c4e; text-anchor: middle; }
.white { fill: #fff; }
.supply { font-size: 7px; text-anchor: middle; fill: #112; }
.te { font-size: 11px; fill: #a0a0a0; }
.ag { font-size: 7px; fill: #0000e0; }

.title { display: flex; align-items: center; flex: none; height: 29px; padding: 0 0 2px 5px; background: #f3f3f3; color: #949494; }
.title h1 { margin-left: 6px; flex: 1; }
.logo { width: 16px; height: 16px; }
.winbtns { display: flex; }
.winbtns button { display: grid; place-items: center; width: 45px; height: 27px; }
.winbtns svg { width: 12px; height: 12px; fill: none; stroke: #888; }

.menu { display: flex; align-items: center; flex: none; height: 27px; border-top: 1px solid #a0a0a0; box-shadow: inset 0 1px #fff; padding: 0 2px 0 1px; gap: 14px; }
.menu > .i { margin-right: -6px; }
.menu > button { white-space: nowrap; }
.mdi { display: flex; gap: 1px; margin-left: auto; align-self: flex-end; padding-bottom: 3px; }
.sq { display: grid; place-items: center; width: 15px; height: 15px; background: #f0f0f0; border: 1px solid; border-color: #fff #696969 #696969 #fff; box-shadow: inset -1px -1px #a0a0a0; flex: none; }
.sq svg { width: 12px; height: 12px; }

.bar { display: flex; flex: none; height: 28px; border-top: 1px solid #a0a0a0; box-shadow: inset 0 1px #fff; }
.group { display: flex; align-items: center; border-right: 1px solid #a0a0a0; padding: 0 0 0 8px; box-shadow: inset 1px 1px #fff; }
.tb { display: grid; place-items: center; width: 22px; height: 22px; flex: none; }
.on { background: #f8f8f8; border: 1px solid; border-color: #a0a0a0 #fff #fff #a0a0a0; }
.gap { margin-left: 2px; }
.sep { width: 8px; height: 20px; flex: none; background: linear-gradient(#a0a0a0, #a0a0a0) 3px 0 / 1px 100% no-repeat; }
.more { display: flex; justify-content: center; width: 27px; height: 22px; padding: 4px 0 0 6px; }
.more svg { width: 10px; height: 8px; shape-rendering: auto; }
.drop { display: grid; place-items: center; width: 12px; height: 22px; padding-right: 3px; }
.drop svg { width: 8px; height: 4px; }
.g-main { padding: 0 2px 0 10px; }
.g-view { padding-left: 12px; border-right: 0; flex: 1; }
.inuse { width: 149px; height: 21px; flex: none; padding: 0 22px 0 3px; appearance: none; border: 1px solid #d5d5d5; border-radius: 2px; color: #000; font: 10px/16px "Noto Sans", "Noto Sans CJK SC", sans-serif; background: linear-gradient(45deg, transparent 50%, #777 50%, #777 62%, transparent 62%) 132px 7px / 5px 5px no-repeat, linear-gradient(-45deg, transparent 50%, #777 50%, #777 62%, transparent 62%) 137px 7px / 5px 5px no-repeat, #fff; }
.g-comp .more { width: 33px; padding-left: 16px; }
.g-probe { padding: 0 2px 0 11px; }
.g-src { padding: 0 2px 0 11px; }
.g-sim { padding-left: 11px; flex: 1; border-right: 0; }
.more.end { width: 18px; margin-left: auto; padding-left: 0; }

.work { display: grid; grid-template-columns: 195px 1fr 25px; flex: 1; min-height: 0; border-top: 2px solid #a0a0a0; }
.toolbox { display: flex; flex-direction: column; padding: 3px 11px 3px 0; border-bottom: 1px solid #808080; margin-bottom: 4px; min-height: 0; box-shadow: inset 0 1px #fff; }
.caption { display: flex; align-items: center; gap: 1px; flex: none; height: 21px; }
.caption h2 { flex: 1; height: 21px; padding: 1px 3px; margin-right: 2px; background: linear-gradient(90deg, #bccddd, #d5e3f0); }
.tree-box { display: flex; flex-direction: column; flex: 1; min-height: 0; margin: 3px 0 0 1px; padding: 0 1px; border: solid; border-width: 1px 2px 2px 1px; border-color: #fff #808080 #808080 #fff; }
.tree-tools { display: flex; align-items: center; gap: 4px; height: 27px; padding: 2px 1px 0 0; flex: none; }
.last { margin-left: auto; }
.tree { flex: 1; border: 1px solid #828790; background: #fff; padding: 2px 7px; }
.tree li { display: flex; align-items: center; height: 18px; }
.minus { width: 9px; height: 9px; border: 1px solid #999; background: linear-gradient(#445a9c, #445a9c) 1px 3px / 5px 1px no-repeat; }
.dots { width: 6px; border-top: 1px dotted #999; }
.node { padding: 0 2px; margin-left: 3px; }
.sel { background: #f0f0f0; }
.tree .child { padding-left: 24px; }
.elbow { width: 10px; height: 18px; background: linear-gradient(#999 1px, transparent 1px) 0 0 / 1px 2px no-repeat, linear-gradient(#999 1px, transparent 1px) 0 2px / 1px 2px no-repeat, linear-gradient(#999 1px, transparent 1px) 0 4px / 1px 2px no-repeat, linear-gradient(#999 1px, transparent 1px) 0 6px / 1px 2px no-repeat, linear-gradient(90deg, #999 1px, transparent 1px) 0 9px / 2px 1px repeat-x; }

.tabs { display: flex; flex: none; height: 21px; align-items: flex-start; padding-left: 1px; gap: 2px; }
.tabs button { min-width: 40px; height: 19px; padding: 0 4px; border: 1px solid; border-color: #696969 #696969 #696969 #fff; box-shadow: inset -1px -1px #a0a0a0, inset 0 1px #a0a0a0; line-height: 19px; text-align: left; }
.tabs .active { min-width: 42px; height: 21px; padding: 2px 5px 0; margin-top: -1px; border-color: #f0f0f0 #808080 #808080 #fff; background: #f0f0f0; box-shadow: inset -1px -1px #c0c0c0; line-height: 21px; }

.docs { display: flex; flex-direction: column; min-width: 0; min-height: 0; border-left: 1px solid #696969; margin-bottom: 4px; }
.frame { flex: 1; display: flex; min-height: 0; padding: 3px 3px 5px 3px; border-right: 1px solid #696969; border-bottom: 1px solid #696969; box-shadow: inset 1px 1px #fff; }
.canvas { flex: 1; display: grid; grid-template: 1fr 17px / 1fr 17px; min-width: 0; border: solid; border-width: 3px 1px 1px 3px; border-color: #757575 #e3e3e3 #e3e3e3 #757575; }
.sheet { display: grid; grid-template: 20px 1fr / 20px 1fr; overflow: hidden; background: conic-gradient(from 0deg at 1px 1px, transparent 75%, #999 0) 8px 8px / 9px 9px, #fff; color: #808080; font: 10px/19px "Liberation Sans", sans-serif; }
.corner { border-right: 1px solid #808080; border-bottom: 1px solid #808080; }
.ruler-x { display: flex; min-width: 0; border-bottom: 1px solid #808080; }
.ruler-x span { width: 96px; flex: none; border-right: 1px solid #808080; text-align: center; padding-right: 4px; }
.ruler-x span:last-child { border-right: 0; }
.ruler-y { min-height: 0; border-right: 1px solid #808080; }
.ruler-y span { display: flex; justify-content: center; align-items: center; height: 96px; border-bottom: 1px solid #808080; padding-right: 3px; }
.vscroll { display: flex; justify-content: center; padding-top: 16px; }
.vscroll i { width: 2px; height: 44%; background: #808080; }
.hscroll { padding: 7px 0 0 16px; }
.hscroll i { display: block; width: 70%; height: 2px; background: #808080; }
.doc-tabs { display: flex; justify-content: space-between; height: 23px; padding: 0 3px 0 2px; flex: none; }
.doc-tab { display: flex; align-items: center; gap: 4px; height: 23px; padding: 1px 3px 0; background: #f0f0f0; border: solid #000; border-width: 0 2px 2px 1px; border-left-color: #fff; border-radius: 0 0 2px 2px; }
.cascade { margin-top: 5px; }

.instruments { display: flex; flex-direction: column; align-items: center; padding: 16px 1px 0 0; box-shadow: inset 0 1px #fff; }
.instruments button { height: 21px; flex: none; display: grid; align-items: start; }
.instruments .down { width: 24px; height: 18px; border: solid #a0a0a0; border-width: 1px 0; display: flex; justify-content: flex-end; align-items: end; }
.down svg { width: 12px; height: 12px; }

.spread { position: relative; display: flex; flex: none; height: 179px; border-top: 1px solid #696969; }
.side { display: flex; flex-direction: column; align-items: center; width: 20px; gap: 1px; padding: 1px 0 5px; }
.side h2 { display: flex; justify-content: flex-start; flex: 1; width: 20px; margin-top: 2px; padding: 2px 1px 2px 6px; writing-mode: vertical-rl; text-orientation: sideways; transform: rotate(180deg); background: linear-gradient(#bccddd, #d5e3f0); line-height: 14px; }
.results { flex: 1; display: flex; flex-direction: column; padding: 7px 4px 5px 6px; }
.results .tabs { padding-left: 0; }
.log { flex: 1; background: #fff; border: solid; border-width: 1px 2px 2px 1px; border-color: #808080 #696969 #696969 #808080; padding: 4px 23px; box-shadow: inset -1px -1px #f0f0f0, inset -2px -2px #a0a0a0; }
.watermark { position: absolute; right: 30px; bottom: 4px; display: flex; align-items: center; gap: 8px; color: #808080; opacity: .68; font: 27px/34px "Noto Sans", "Noto Sans CJK SC", sans-serif; white-space: nowrap; }
.watermark svg { width: 36px; height: 30px; shape-rendering: auto; }
.mid { padding: 0 2px; }

.status { display: flex; flex: none; height: 18px; border-top: 1px solid #a0a0a0; box-shadow: inset 0 1px #fff; padding-top: 3px; line-height: 14px; }
.s-main { flex: 1; text-align: right; padding-right: 33px; }
.s-cell { width: 123px; border-left: 1px solid #ccc; padding-left: 4px; }
.s-prog { display: flex; width: 64px; padding: 3px 4px 0; border: solid #ccc; border-width: 0 1px; }
.s-prog i { flex: 1; height: 16px; margin: 0 1px; border: 1px solid #a0a0a0; border-right-color: #ddd; }
.grip { width: 19px; padding: 4px 0 0 7px; }
.grip svg { width: 12px; height: 12px; }
```
